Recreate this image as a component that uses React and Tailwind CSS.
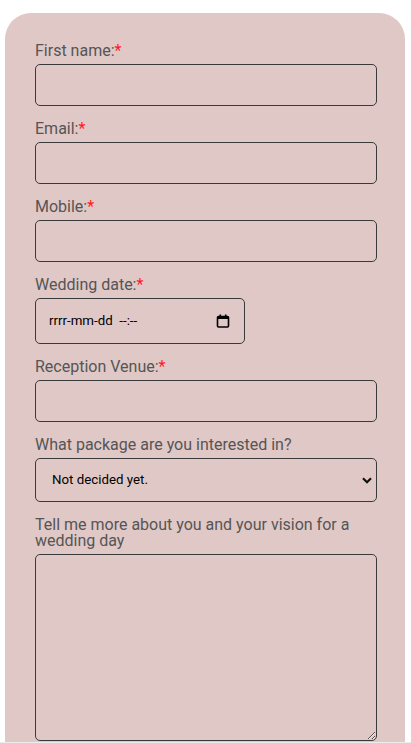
import { useState } from 'react';

const FIELDS = [
  { key: 'firstName', label: 'First name:', required: true },
  { key: 'email', label: 'Email:', required: true },
  { key: 'mobile', label: 'Mobile:', required: true },
];

function Label({ htmlFor, children, required }) {
  return (
    <label htmlFor={htmlFor} className="block text-[16px] leading-[16px] text-[#555] pt-[1px] mb-[5px]">
      {children}
      {required && <span className="text-[#ff1a1a]">*</span>}
    </label>
  );
}

function App() {
  const [values, setValues] = useState({});
  const [pkg, setPkg] = useState('none');

  const update = (key) => (e) => setValues(prev => ({ ...prev, [key]: e.target.value }));

  return (
    <div className="min-h-[743px] bg-white font-['Roboto',sans-serif] flex flex-col">
      <form className="w-[400px] ml-[5px] mt-[13px] bg-[#e0c8c7] rounded-t-[26px] pt-[29px] pl-[30px] pr-[28px] pb-[1px]">
        {FIELDS.map(f => (
          <div key={f.key} className="mb-[14px]">
            <Label htmlFor={f.key} required={f.required}>{f.label}</Label>
            <input
              id={f.key}
              type="text"
              value={values[f.key] || ''}
              onChange={update(f.key)}
              className="block w-full h-[42px] border border-[#3a3a3a] rounded-[5px] bg-transparent px-2 text-[14px] outline-none"
            />
          </div>
        ))}

        {/* Wedding date */}
        <div className="mb-[14px]">
          <Label htmlFor="date" required>Wedding date:</Label>
          <div
            id="date"
            className="flex items-center justify-between w-[210px] h-[46px] border border-[#3a3a3a] rounded-[5px] pl-[13px] pr-[14px]"
          >
            <span className="text-[13.3px] text-black">rrrr-mm-dd&nbsp; --:--</span>
            <svg width="14" height="14" viewBox="0 0 14 14" className="text-black">
              <rect x="1.5" y="2.5" width="11" height="10.5" rx="1" fill="none" stroke="currentColor" strokeWidth="1.6" />
              <rect x="1.5" y="2.5" width="11" height="2.5" fill="currentColor" />
              <rect x="3.5" y="0.5" width="1.6" height="3" fill="currentColor" />
              <rect x="8.9" y="0.5" width="1.6" height="3" fill="currentColor" />
            </svg>
          </div>
        </div>

        <div className="mb-[14px]">
          <Label htmlFor="venue" required>Reception Venue:</Label>
          <input
            id="venue"
            type="text"
            value={values.venue || ''}
            onChange={update('venue')}
            className="block w-full h-[42px] border border-[#3a3a3a] rounded-[5px] bg-transparent px-2 text-[14px] outline-none"
          />
        </div>

        <div className="mb-[14px]">
          <Label htmlFor="package">What package are you interested in?</Label>
          <div className="relative">
            <select
              id="package"
              value={pkg}
              onChange={(e) => setPkg(e.target.value)}
              className="block w-full h-[44px] appearance-none border border-[#3a3a3a] rounded-[5px] bg-transparent pl-[16px] text-[13.3px] text-black outline-none"
            >
              <option value="none">Not decided yet.</option>
              <option value="basic">Basic</option>
              <option value="full">Full day</option>
            </select>
            <svg width="10" height="7" viewBox="0 0 10 7" className="absolute right-[5px] top-[19px] pointer-events-none">
              <path d="M1 1.2 L5 5.2 L9 1.2" fill="none" stroke="#111" strokeWidth="2.2" />
            </svg>
          </div>
        </div>

        <div>
          <Label htmlFor="vision">Tell me more about you and your vision for a wedding day</Label>
          <textarea
            id="vision"
            value={values.vision || ''}
            onChange={update('vision')}
            className="block w-full h-[187px] border border-[#3a3a3a] rounded-[5px] bg-transparent p-2 text-[14px] outline-none"
          />
        </div>
      </form>
      <div className="h-[2px] bg-[#ececec]" />
    </div>
  );
}

export default App;
